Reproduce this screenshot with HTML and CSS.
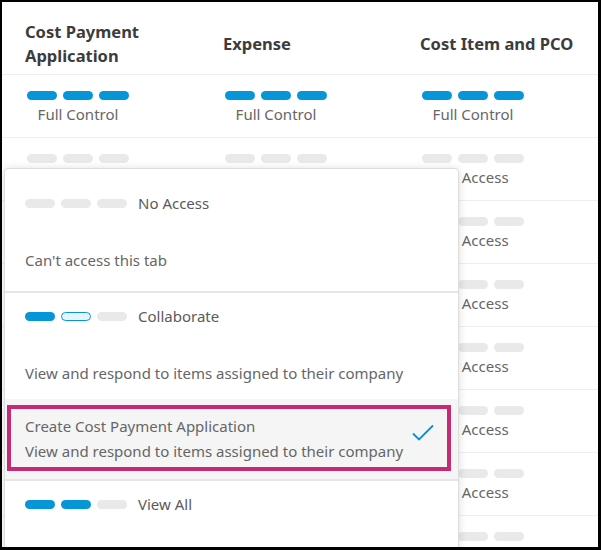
FILE: index.html
```html
<!DOCTYPE html>
<html>
<head>
<meta charset="utf-8">
<link rel="stylesheet" href="styles.css">
</head>
<body>
<div class="frame">
  <div class="table">
    <div class="row head">
      <div class="hcell">Cost Payment Application</div>
      <div class="hcell">Expense</div>
      <div class="hcell">Cost Item and PCO</div>
    </div>
    <div class="row">
      <div class="cell"><div class="level"><div class="pills"><span class="pill on"></span><span class="pill on"></span><span class="pill on"></span></div><div class="label">Full Control</div></div></div>
      <div class="cell"><div class="level"><div class="pills"><span class="pill on"></span><span class="pill on"></span><span class="pill on"></span></div><div class="label">Full Control</div></div></div>
      <div class="cell"><div class="level"><div class="pills"><span class="pill on"></span><span class="pill on"></span><span class="pill on"></span></div><div class="label">Full Control</div></div></div>
    </div>
    <div class="row">
      <div class="cell"><div class="level"><div class="pills"><span class="pill"></span><span class="pill"></span><span class="pill"></span></div><div class="label">No Access</div></div></div>
      <div class="cell"><div class="level"><div class="pills"><span class="pill"></span><span class="pill"></span><span class="pill"></span></div><div class="label">No Access</div></div></div>
      <div class="cell"><div class="level"><div class="pills"><span class="pill"></span><span class="pill"></span><span class="pill"></span></div><div class="label">No Access</div></div></div>
    </div>
    <div class="row">
      <div class="cell"><div class="level"><div class="pills"><span class="pill"></span><span class="pill"></span><span class="pill"></span></div><div class="label">No Access</div></div></div>
      <div class="cell"><div class="level"><div class="pills"><span class="pill"></span><span class="pill"></span><span class="pill"></span></div><div class="label">No Access</div></div></div>
      <div class="cell"><div class="level"><div class="pills"><span class="pill"></span><span class="pill"></span><span class="pill"></span></div><div class="label">No Access</div></div></div>
    </div>
    <div class="row">
      <div class="cell"><div class="level"><div class="pills"><span class="pill"></span><span class="pill"></span><span class="pill"></span></div><div class="label">No Access</div></div></div>
      <div class="cell"><div class="level"><div class="pills"><span class="pill"></span><span class="pill"></span><span class="pill"></span></div><div class="label">No Access</div></div></div>
      <div class="cell"><div class="level"><div class="pills"><span class="pill"></span><span class="pill"></span><span class="pill"></span></div><div class="label">No Access</div></div></div>
    </div>
    <div class="row">
      <div class="cell"><div class="level"><div class="pills"><span class="pill"></span><span class="pill"></span><span class="pill"></span></div><div class="label">No Access</div></div></div>
      <div class="cell"><div class="level"><div class="pills"><span class="pill"></span><span class="pill"></span><span class="pill"></span></div><div class="label">No Access</div></div></div>
      <div class="cell"><div class="level"><div class="pills"><span class="pill"></span><span class="pill"></span><span class="pill"></span></div><div class="label">No Access</div></div></div>
    </div>
    <div class="row">
      <div class="cell"><div class="level"><div class="pills"><span class="pill"></span><span class="pill"></span><span class="pill"></span></div><div class="label">No Access</div></div></div>
      <div class="cell"><div class="level"><div class="pills"><span class="pill"></span><span class="pill"></span><span class="pill"></span></div><div class="label">No Access</div></div></div>
      <div class="cell"><div class="level"><div class="pills"><span class="pill"></span><span class="pill"></span><span class="pill"></span></div><div class="label">No Access</div></div></div>
    </div>
    <div class="row">
      <div class="cell"><div class="level"><div class="pills"><span class="pill"></span><span class="pill"></span><span class="pill"></span></div><div class="label">No Access</div></div></div>
      <div class="cell"><div class="level"><div class="pills"><span class="pill"></span><span class="pill"></span><span class="pill"></span></div><div class="label">No Access</div></div></div>
      <div class="cell"><div class="level"><div class="pills"><span class="pill"></span><span class="pill"></span><span class="pill"></span></div><div class="label">No Access</div></div></div>
    </div>
    <div class="row">
      <div class="cell"><div class="level"><div class="pills"><span class="pill"></span><span class="pill"></span><span class="pill"></span></div></div></div>
      <div class="cell"><div class="level"><div class="pills"><span class="pill"></span><span class="pill"></span><span class="pill"></span></div></div></div>
      <div class="cell"><div class="level"><div class="pills"><span class="pill"></span><span class="pill"></span><span class="pill"></span></div></div></div>
    </div>
  </div>

  <div class="dropdown">
    <div class="item">
      <div class="ihead"><div class="pills"><span class="pill"></span><span class="pill"></span><span class="pill"></span></div><span class="iname">No Access</span></div>
      <div class="idesc">Can't access this tab</div>
    </div>
    <div class="sep"></div>
    <div class="item">
      <div class="ihead"><div class="pills"><span class="pill on"></span><span class="pill half"></span><span class="pill"></span></div><span class="iname">Collaborate</span></div>
      <div class="idesc">View and respond to items assigned to their company</div>
    </div>
    <div class="sub">
      <div class="subbox">
        <div class="subtitle">Create Cost Payment Application</div>
        <div class="subdesc">View and respond to items assigned to their company</div>
        <svg class="check" width="22" height="17" viewBox="0 0 22 17"><path d="M1 9.5 L7 15.5 L21 1.5" fill="none" stroke="#0a8fd0" stroke-width="1.8"/></svg>
      </div>
    </div>
    <div class="sep"></div>
    <div class="item">
      <div class="ihead"><div class="pills"><span class="pill on"></span><span class="pill on"></span><span class="pill"></span></div><span class="iname">View All</span></div>
    </div>
  </div>
</div>
</body>
</html>
```

FILE: styles.css
```css
html, body {
  margin: 0;
  padding: 0;
  background: #000;
}
body {
  font-family: "Noto Sans", "Open Sans", sans-serif;
  width: 601px;
  height: 550px;
  overflow: hidden;
}
.frame {
  position: relative;
  margin: 2px 3px 3px 2px;
  width: 596px;
  height: 545px;
  background: #fff;
  overflow: hidden;
}
.row {
  display: grid;
  grid-template-columns: 198px 197px 1fr;
  padding-left: 23px;
  height: 62px;
  border-bottom: 1px solid #eeeeee;
  box-sizing: content-box;
}
.row.head {
  height: 61px;
  padding-top: 11px;
  align-items: center;
}
.hcell {
  font-weight: 700;
  font-size: 16.5px;
  line-height: 24px;
  color: #3c3c3c;
  padding-right: 14px;
}
.cell {
  display: flex;
  align-items: flex-start;
  padding-top: 16px;
  padding-left: 2px;
}
.level {
  display: flex;
  flex-direction: column;
  align-items: center;
}
.pills {
  display: flex;
  gap: 6px;
}
.pill {
  display: block;
  width: 30px;
  height: 9px;
  border-radius: 5px;
  background: #e9e9e9;
  box-sizing: border-box;
}
.pill.on {
  background: #0696d7;
}
.pill.half {
  background: #e8f4fb;
  border: 1.5px solid #0696d7;
}
.label {
  margin-top: 4px;
  font-size: 15px;
  line-height: 20px;
  color: #666;
}
.dropdown {
  position: absolute;
  left: 2px;
  top: 166px;
  width: 455px;
  height: 400px;
  background: #fff;
  border: 1px solid #dddddd;
  border-radius: 4px;
  box-shadow: 0 1px 8px rgba(0, 0, 0, 0.14);
  padding-top: 11px;
  box-sizing: border-box;
}
.item {
  padding: 13px 0 21px 20px;
}
.ihead {
  display: flex;
  align-items: center;
  height: 20px;
  gap: 11px;
}
.iname {
  font-size: 15px;
  line-height: 20px;
  color: #5a5a5a;
}
.idesc {
  margin-top: 37px;
  font-size: 15px;
  line-height: 20px;
  color: #666;
}
.item + .sub {
  margin-top: -5px;
}
.sep {
  height: 2px;
  background: #e6e6e6;
}
.sub {
  background: #f5f5f5;
  padding: 6px 7px 8px 2px;
}
.subbox {
  position: relative;
  border: 4px solid #c62a73;
  padding: 5px 0 3px 14px;
}
.subtitle, .subdesc {
  font-size: 15px;
  line-height: 25px;
  color: #666;
}
.check {
  position: absolute;
  right: 13px;
  top: 15px;
}
```
